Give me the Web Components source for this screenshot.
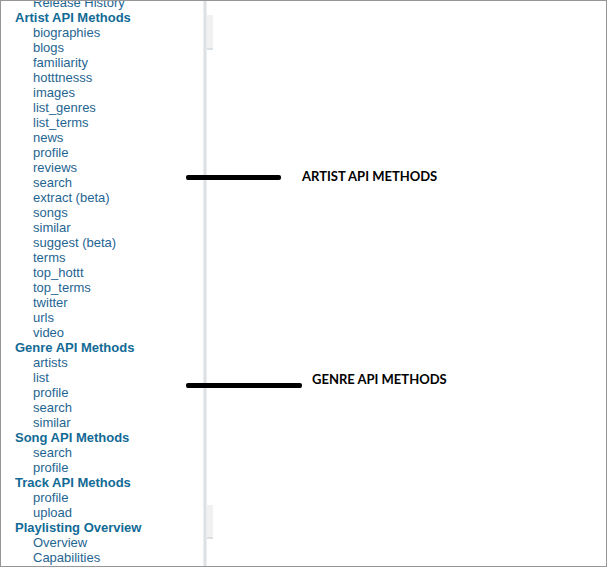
<!DOCTYPE html>
<html lang="en">
<head>
<meta charset="utf-8">
<title>API Methods</title>
<style>
body { margin: 0; background: #fff; }
</style>
</head>
<body>
<doc-page>
  <nav-list slot="nav">
    <nav-group items="Release History"></nav-group>
    <nav-group heading="Artist API Methods" items="biographies,blogs,familiarity,hotttnesss,images,list_genres,list_terms,news,profile,reviews,search,extract (beta),songs,similar,suggest (beta),terms,top_hottt,top_terms,twitter,urls,video"></nav-group>
    <nav-group heading="Genre API Methods" items="artists,list,profile,search,similar"></nav-group>
    <nav-group heading="Song API Methods" items="search,profile"></nav-group>
    <nav-group heading="Track API Methods" items="profile,upload"></nav-group>
    <nav-group heading="Playlisting Overview" items="Overview,Capabilities"></nav-group>
  </nav-list>
  <call-out style="--top:167px; --line:95px; --gap:21px; --drop:7px">ARTIST API METHODS</call-out>
  <call-out style="--top:370px; --line:116px; --gap:10px; --drop:12px">GENRE API METHODS</call-out>
</doc-page>
<script>
class DocPage extends HTMLElement {
  constructor() {
    super();
    this.attachShadow({ mode: 'open' }).innerHTML = `
      <style>
        :host { display: grid; grid-template-columns: 202px 4px 6px 1fr; box-sizing: border-box;
          height: 100vh; overflow: hidden; position: relative; border: 1px solid #969696; background: #fff; }
        .rule { background: #dde1e4; border: solid #ebeef0; border-width: 0 1px; }
        .edge { display: flex; flex-direction: column; justify-content: space-between; padding: 14px 0 27px; }
        .tab { height: 33px; background: #f1f1f1; border-bottom: 2px solid #dae0e5; }
        .tab + .tab { height: 32px; border-color: #dedfe1; }
        .side { min-height: 0; }
      </style>
      <div class="side"><slot name="nav"></slot></div>
      <div class="rule"></div>
      <div class="edge"><div class="tab"></div><div class="tab"></div></div>
      <main><slot></slot></main>`;
  }
}
class NavList extends HTMLElement {
  constructor() {
    super();
    this.attachShadow({ mode: 'open' }).innerHTML = `
      <style>
        :host { display: block; margin-top: -6px; padding-left: 14px;
          font: 13px/15px "Liberation Sans", Arial, sans-serif; color: #1f6592; }
      </style>
      <nav aria-label="API methods"><slot></slot></nav>`;
  }
}
class NavGroup extends HTMLElement {
  constructor() {
    super();
    this.attachShadow({ mode: 'open' }).innerHTML = `
      <style>
        :host { display: block; }
        a { display: block; color: inherit; text-decoration: none; white-space: nowrap; }
        .heading { font-weight: bold; color: #126a96; }
        ul { list-style: none; margin: 0; padding: 0 0 0 18px; }
      </style>`;
  }
  connectedCallback() {
    const link = (text) => {
      const a = document.createElement('a');
      a.href = '#';
      a.textContent = text;
      return a;
    };
    const heading = this.getAttribute('heading');
    if (heading) {
      const a = link(heading);
      a.className = 'heading';
      this.shadowRoot.append(a);
    }
    const ul = document.createElement('ul');
    for (const item of this.getAttribute('items').split(',')) {
      const li = document.createElement('li');
      li.append(link(item));
      ul.append(li);
    }
    this.shadowRoot.append(ul);
  }
}
class CallOut extends HTMLElement {
  constructor() {
    super();
    this.attachShadow({ mode: 'open' }).innerHTML = `
      <style>
        :host { position: absolute; left: 185px; top: var(--top); display: flex; align-items: flex-start;
          gap: var(--gap); white-space: nowrap; color: #000;
          font: bold 13px/16px Lato, sans-serif; }
        .line { width: var(--line); height: 5px; margin-top: var(--drop); border-radius: 2px; background: #000; }
      </style>
      <span class="line"></span><span><slot></slot></span>`;
  }
}
customElements.define('doc-page', DocPage);
customElements.define('nav-list', NavList);
customElements.define('nav-group', NavGroup);
customElements.define('call-out', CallOut);
</script>
</body>
</html>
